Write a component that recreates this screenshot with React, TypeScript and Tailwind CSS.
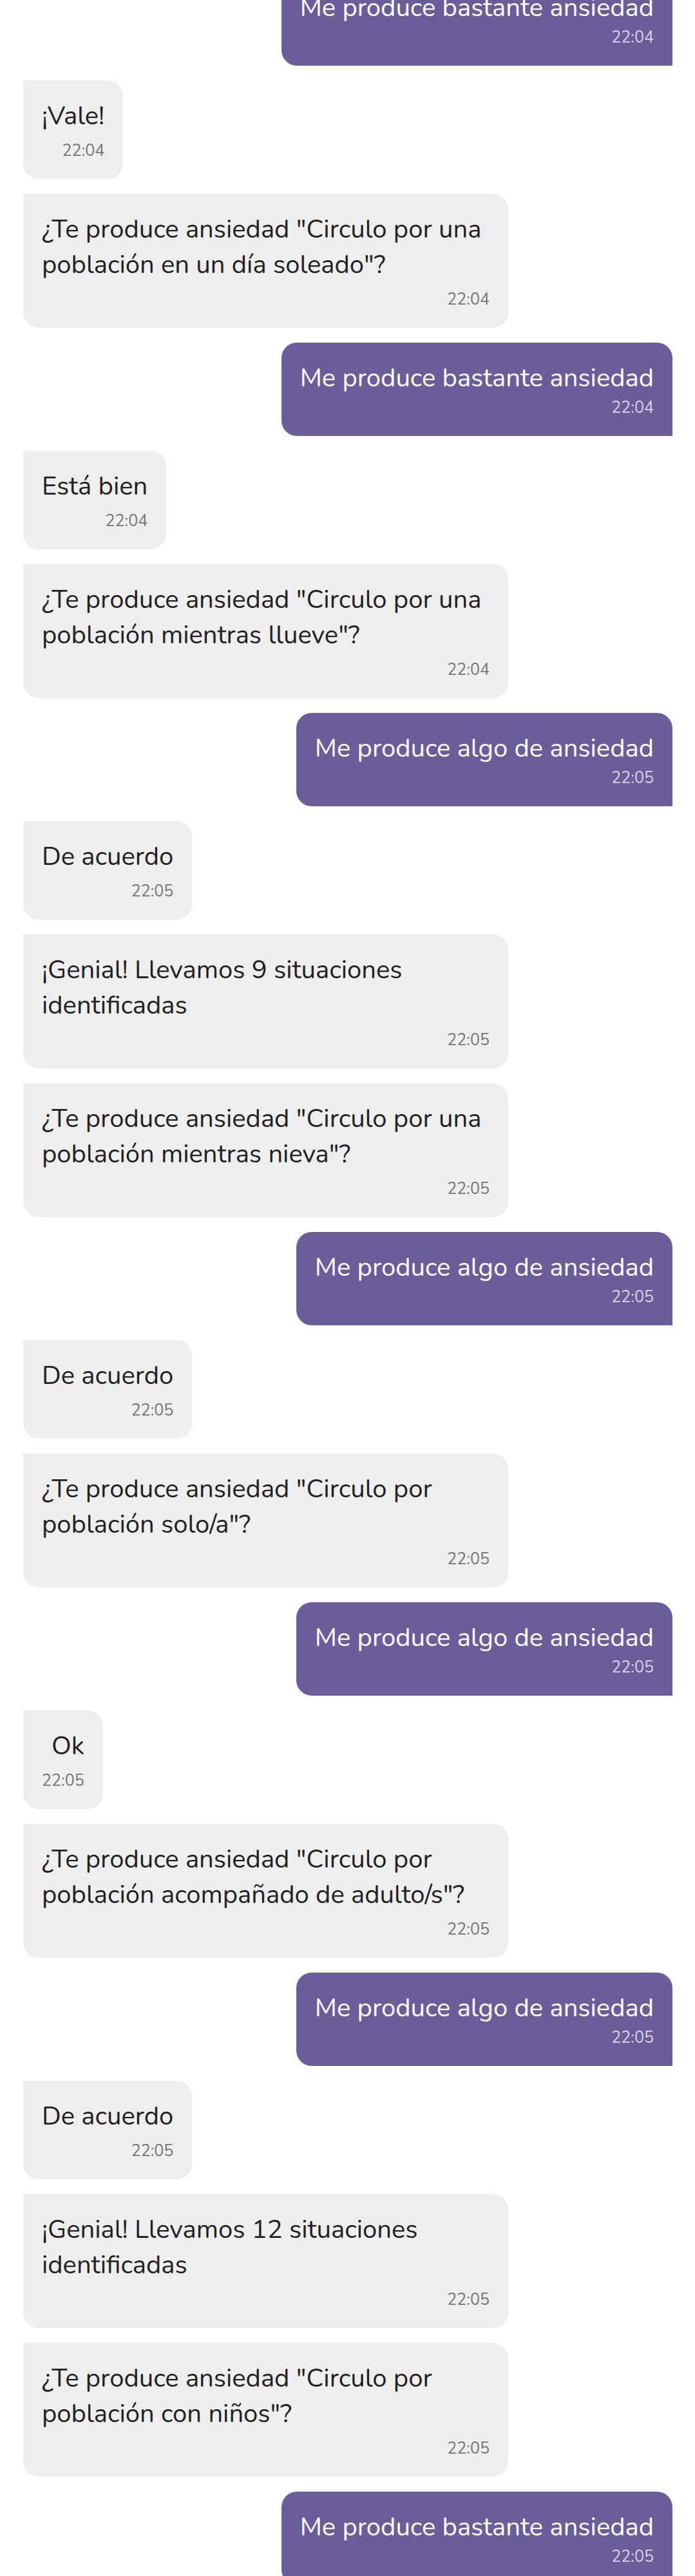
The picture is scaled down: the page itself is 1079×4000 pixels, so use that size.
import React from "react";

type Msg = { me: boolean; text: string; time: string };

const msgs: Msg[] = [
  { me: true, text: "Me produce bastante ansiedad", time: "22:04" },
  { me: false, text: "¡Vale!", time: "22:04" },
  { me: false, text: "¿Te produce ansiedad \"Circulo por una población en un día soleado\"?", time: "22:04" },
  { me: true, text: "Me produce bastante ansiedad", time: "22:04" },
  { me: false, text: "Está bien", time: "22:04" },
  { me: false, text: "¿Te produce ansiedad \"Circulo por una población mientras llueve\"?", time: "22:04" },
  { me: true, text: "Me produce algo de ansiedad", time: "22:05" },
  { me: false, text: "De acuerdo", time: "22:05" },
  { me: false, text: "¡Genial! Llevamos 9 situaciones identificadas", time: "22:05" },
  { me: false, text: "¿Te produce ansiedad \"Circulo por una población mientras nieva\"?", time: "22:05" },
  { me: true, text: "Me produce algo de ansiedad", time: "22:05" },
  { me: false, text: "De acuerdo", time: "22:05" },
  { me: false, text: "¿Te produce ansiedad \"Circulo por población solo/a\"?", time: "22:05" },
  { me: true, text: "Me produce algo de ansiedad", time: "22:05" },
  { me: false, text: "Ok", time: "22:05" },
  { me: false, text: "¿Te produce ansiedad \"Circulo por población acompañado de adulto/s\"?", time: "22:05" },
  { me: true, text: "Me produce algo de ansiedad", time: "22:05" },
  { me: false, text: "De acuerdo", time: "22:05" },
  { me: false, text: "¡Genial! Llevamos 12 situaciones identificadas", time: "22:05" },
  { me: false, text: "¿Te produce ansiedad \"Circulo por población con niños\"?", time: "22:05" },
  { me: true, text: "Me produce bastante ansiedad", time: "22:05" },
];

function Bubble({ m }: { m: Msg }) {
  if (m.me) {
    return (
      <div className="flex justify-end">
        <div className="flex max-w-[753px] flex-col items-end rounded-[24px] rounded-br-none bg-[#6b5c9a] px-[29px] pt-[28px] pb-[31px]">
          <div className="text-[40px] leading-[55px] text-white">{m.text}</div>
          <div className="mt-[6px] text-[25px] leading-[25px] text-[#d9d4e6]">{m.time}</div>
        </div>
      </div>
    );
  }
  return (
    <div className="flex justify-start">
      <div className="flex max-w-[753px] flex-col items-end rounded-[24px] rounded-tl-none bg-[#eeeeee] px-[29px] pt-[28px] pb-[31px]">
        <div className="text-[40px] leading-[55px] text-[#222222]">{m.text}</div>
        <div className="mt-[14px] text-[25px] leading-[25px] text-[#757575]">{m.time}</div>
      </div>
    </div>
  );
}

export default function App() {
  return (
    <div className="h-[4000px] overflow-hidden bg-white font-['Nunito','Lato',sans-serif]">
      <div className="-mt-[43px] flex flex-col gap-[23px] pl-[36px] pr-[35px]">
        {msgs.map((m, i) => (
          <Bubble key={i} m={m} />
        ))}
      </div>
    </div>
  );
}
